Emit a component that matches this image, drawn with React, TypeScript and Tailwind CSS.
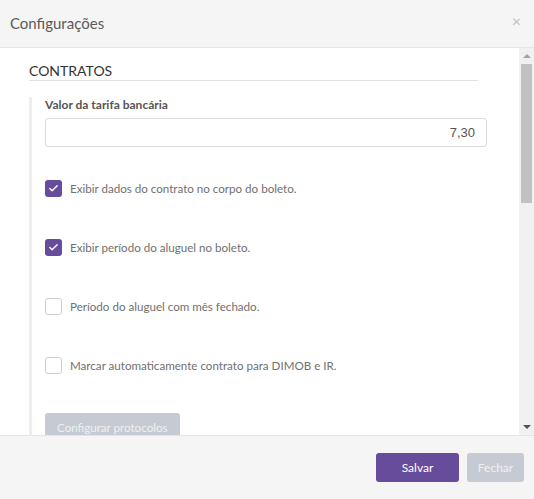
import { Check } from "lucide-react";

const options = [
  { label: "Exibir dados do contrato no corpo do boleto.", checked: true },
  { label: "Exibir período do aluguel no boleto.", checked: true },
  { label: "Período do aluguel com mês fechado.", checked: false },
  { label: "Marcar automaticamente contrato para DIMOB e IR.", checked: false },
];

const CheckRow = ({ label, checked }: { label: string; checked: boolean }) => (
  <label className="flex items-center gap-[8px]">
    <span
      className={
        checked
          ? "w-[17px] h-[17px] rounded-[3px] bg-[#674c9b] flex items-center justify-center"
          : "w-[17px] h-[17px] rounded-[3px] border border-[#cfcfcf] bg-white"
      }
    >
      {checked && <Check size={11} strokeWidth={3} className="text-white" />}
    </span>
    <span className="text-[11.6px] text-[#707070] leading-[17px]">{label}</span>
  </label>
);

const App = () => {
  return (
    <div className="w-[534px] h-[499px] flex flex-col bg-white font-['Lato',sans-serif] overflow-hidden">
      {/* Header */}
      <div className="h-[48px] shrink-0 bg-[#f5f5f5] border-b border-[#e5e5e5] flex items-center justify-between pl-[10px] pr-[13px]">
        <h1 className="text-[15px] text-[#5a5a5a]">Configurações</h1>
        <span className="text-[16px] text-[#c0c0c0] leading-none -mt-[6px]">×</span>
      </div>

      {/* Body */}
      <div className="flex-1 flex min-h-0">
        <div className="flex-1 overflow-hidden pl-[29px] pr-[32px] pt-[15px]">
          <h3 className="mr-[9px] text-[14px] text-[#333] leading-[15px] pb-[2px] border-b border-[#e2e2e2]">CONTRATOS</h3>

          <div className="mt-[16px] border-l-[3px] border-[#eeeeee] pl-[13px] pb-[20px]">
            <p className="text-[12px] font-bold text-[#555] leading-[15px]">Valor da tarifa bancária</p>
            <div className="mt-[6px] h-[29px] border border-[#dcdcdc] rounded-[3px] flex items-center justify-end pr-[11px]">
              <span className="text-[13px] text-[#555] font-['Liberation_Sans',sans-serif]">7,30</span>
            </div>

            <div className="mt-[33px] flex flex-col gap-[42px]">
              {options.map((o) => (
                <CheckRow key={o.label} label={o.label} checked={o.checked} />
              ))}
            </div>

            <button className="mt-[39px] h-[30px] px-[12px] rounded-[3px] bg-[#c6cad3] text-[11.6px] text-[#eef0f4]">
              Configurar protocolos
            </button>
          </div>
        </div>

        {/* Scrollbar */}
        <div className="w-[15px] shrink-0 bg-[#f1f1f1] flex flex-col items-center">
          <div className="h-[16px] flex items-center justify-center">
            <div className="w-0 h-0 border-l-[4px] border-r-[4px] border-b-[4px] border-l-transparent border-r-transparent border-b-[#a3a3a3]" />
          </div>
          <div className="w-[11px] h-[139px] bg-[#c1c1c1]" />
          <div className="flex-1" />
          <div className="h-[16px] flex items-center justify-center">
            <div className="w-0 h-0 border-l-[4px] border-r-[4px] border-t-[4px] border-l-transparent border-r-transparent border-t-[#505050]" />
          </div>
        </div>
      </div>

      {/* Footer */}
      <div className="h-[64px] shrink-0 bg-[#f5f5f5] border-t border-[#e5e5e5] flex items-start justify-end gap-[8px] pt-[17px] pr-[10px]">
        <button className="w-[83px] h-[29px] rounded-[3px] bg-[#674c9b] text-[12px] text-white">Salvar</button>
        <button className="w-[57px] h-[29px] rounded-[3px] bg-[#c6cad3] text-[12px] text-[#eef0f4]">Fechar</button>
      </div>
    </div>
  );
};

export default App;
